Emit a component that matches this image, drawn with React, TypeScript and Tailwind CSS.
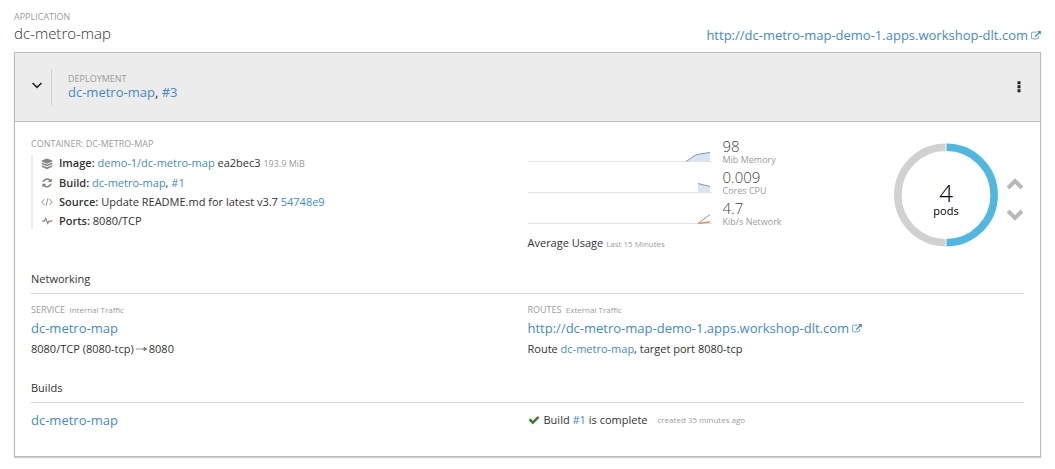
import type { ReactNode } from 'react';

const EXTERNAL_LINK =
  'M1408 928v320q0 119-84.5 203.5t-203.5 84.5h-832q-119 0-203.5-84.5t-84.5-203.5v-832q0-119 84.5-203.5t203.5-84.5h704q14 0 23 9t9 23v64q0 14-9 23t-23 9h-704q-66 0-113 47t-47 113v832q0 66 47 113t113 47h832q66 0 113-47t47-113v-320q0-14 9-23t23-9h64q14 0 23 9t9 23zm384-864v512q0 26-19 45t-45 19-45-19l-176-176-652 652q-10 10-23 10t-23-10l-114-114q-10-10-10-23t10-23l652-652-176-176q-19-19-19-45t19-45 45-19h512q26 0 45 19t19 45z';
const REFRESH =
  'M1639 1056q0 5-1 7-64 268-268 434.5t-478 166.5q-146 0-282.5-55t-243.5-157l-129 129q-19 19-45 19t-45-19-19-45v-448q0-26 19-45t45-19h448q26 0 45 19t19 45-19 45l-137 137q71 66 161 102t187 36q134 0 250-65t186-179q11-17 53-117 8-23 30-23h192q13 0 22.5 9.5t9.5 22.5zm25-800v448q0 26-19 45t-45 19h-448q-26 0-45-19t-19-45 19-45l138-138q-148-137-349-137-134 0-250 65t-186 179q-11 17-53 117-8 23-30 23h-199q-13 0-22.5-9.5t-9.5-22.5v-7q65-268 270-434.5t480-166.5q146 0 284 55.5t245 156.5l130-129q19-19 45-19t45 19 19 45z';
const CHECK =
  'M1671 566q0 40-28 68l-724 724-136 136q-28 28-68 28t-68-28l-136-136-362-362q-28-28-28-68t28-68l136-136q28-28 68-28t68 28l294 295 656-657q28-28 68-28t68 28l136 136q28 28 28 68z';

function Link({ children }: { children: ReactNode }) {
  return (
    <a href="#" className="text-[#428bca] hover:underline">
      {children}
    </a>
  );
}

function RouteLink() {
  return (
    <a href="#" className="flex items-center gap-[3px] text-[13px] leading-5 text-[#428bca] hover:underline">
      http://dc-metro-map-demo-1.apps.workshop-dlt.com
      <svg viewBox="0 0 1792 1664" className="h-[9px] w-[10px] fill-current" aria-hidden="true">
        <path d={EXTERNAL_LINK} />
      </svg>
    </a>
  );
}

function Label({ children }: { children: ReactNode }) {
  return <div className="text-[9px] leading-3 text-[#9c9c9c]">{children}</div>;
}

function Heading({ children }: { children: ReactNode }) {
  return (
    <h2 className="border-b border-[#d6d6d6] pb-1 text-[11px] leading-5 text-[#333]">{children}</h2>
  );
}

function Detail({ icon, name, children }: { icon: ReactNode; name: string; children: ReactNode }) {
  return (
    <li className="flex items-center gap-1.5 whitespace-nowrap">
      <svg viewBox="0 0 12 12" className="size-3 shrink-0 text-[#848484]" aria-hidden="true">
        {icon}
      </svg>
      <span>
        <span className="font-semibold">{name}:</span> {children}
      </span>
    </li>
  );
}

function Metric({ value, unit, children }: { value: string; unit: string; children: ReactNode }) {
  return (
    <div className="flex h-[31px] items-start gap-2.5">
      <svg viewBox="0 0 185 24" className="h-6 w-[185px]" aria-hidden="true">
        <path d="M0 23.5H184" stroke="#e3e3e3" />
        {children}
      </svg>
      <div>
        <div className="text-[15px] leading-4 font-light text-[#444]">{value}</div>
        <div className="text-[9px] leading-3 text-[#9c9c9c]">{unit}</div>
      </div>
    </div>
  );
}

export default function App() {
  return (
    <main className="bg-white px-3.5 pt-[11px] pb-3 font-['Open_Sans',sans-serif] text-[11px] leading-[18px] text-[#333]">
      <header className="flex items-end justify-between pb-[7px]">
        <div>
          <Label>APPLICATION</Label>
          <h1 className="pb-0.5 text-[15px] leading-5 font-light">dc-metro-map</h1>
        </div>
        <RouteLink />
      </header>

      <section className="border border-[#bbb] shadow-[0_1px_1px_#ccc]">
        <div className="flex items-center border-b border-[#bbb] bg-[#ececec] py-4">
          <button type="button" aria-label="Collapse deployment" className="flex h-9 w-[37px] items-center justify-end border-r border-[#d0d0d0] pr-2 pb-1">
            <svg viewBox="0 0 12 12" className="size-3 fill-none stroke-[#292929]" strokeWidth="1.7" aria-hidden="true">
              <path d="M1.5 4 6 8.3 10.5 4" />
            </svg>
          </button>
          <div className="grow pl-4">
            <Label>DEPLOYMENT</Label>
            <div className="pb-px text-[13px] leading-[15px]">
              <Link>dc-metro-map</Link>, <Link>#3</Link>
            </div>
          </div>
          <button type="button" aria-label="Deployment actions" className="mr-[15px] flex w-3 justify-center">
            <svg viewBox="0 0 4 12" className="h-3 w-1 fill-[#222]" aria-hidden="true">
              <path d="M.5 .2h3v3h-3zM.5 4.2h3v3h-3zM.5 8.2h3v3h-3z" />
            </svg>
          </button>
        </div>

        <div className="px-4 pt-4 pb-[26px]">
          <div className="grid grid-cols-2">
            <div>
              <Label>CONTAINER: DC-METRO-MAP</Label>
              <ul className="mt-1 flex flex-col gap-px border-l-2 border-[#eee] pl-2">
                <Detail
                  name="Image"
                  icon={
                    <g fill="currentColor">
                      <path d="M6 .5 11.3 2.6v1L6 5.7.7 3.6v-1z" />
                      <path d="M.7 4.5 6 6.6l5.3-2.1v1.7L6 8.3.7 6.2zM.7 7.2 6 9.3l5.3-2.1v1.6L6 11.3.7 8.8z" />
                    </g>
                  }
                >
                  <Link>demo-1/dc-metro-map</Link> ea2bec3 <span className="text-[9px] text-[#9c9c9c]">193.9 MiB</span>
                </Detail>
                <Detail
                  name="Build"
                  icon={<path transform="translate(.6 .4) scale(.0061)" fill="currentColor" d={REFRESH} />}
                >
                  <Link>dc-metro-map</Link>, <Link>#1</Link>
                </Detail>
                <Detail
                  name="Source"
                  icon={<path d="M3.5 3 .8 6l2.7 3M8.5 3l2.7 3-2.7 3M7 2.2 5 9.8" fill="none" stroke="currentColor" strokeWidth=".9" />}
                >
                  Update README.md for latest v3.7 <Link>54748e9</Link>
                </Detail>
                <Detail
                  name="Ports"
                  icon={<path d="M1 6.2h2.300l1.400-3 2 5.300 1.400-2.300h3.400" fill="none" stroke="currentColor" strokeWidth="1.2" />}
                >
                  8080/TCP
                </Detail>
              </ul>
            </div>

            <div className="flex justify-between">
              <div>
                <Metric value="98" unit="Mib Memory">
                  <path d="M158 23.5 166 18q3.5-2 6-2l10-1.5v9z" fill="#dbe4f0" />
                  <path d="M158 23.5 166 18q3.5-2 6-2l10-1.5" fill="none" stroke="#7399c6" />
                </Metric>
                <Metric value="0.009" unit="Cores CPU">
                  <path d="M170 14.5 182 17.5v6h-12z" fill="#dbe4f0" />
                  <path d="M170 14.5 182 17.5" stroke="#7399c6" />
                </Metric>
                <Metric value="4.7" unit="Kib/s Network">
                  <path d="M170 23.5 182 14.5" stroke="#7399c6" />
                  <path d="M170 23.5 182 22" stroke="#f08a4b" strokeWidth="1.3" />
                </Metric>
                <div className="mt-[3px]">
                  Average Usage <span className="text-[8px] text-[#9c9c9c]">Last 15 Minutes</span>
                </div>
              </div>

              <div className="flex items-start gap-2 pt-[5px]">
                <div className="grid place-items-center">
                  <svg viewBox="0 0 104 104" className="col-start-1 row-start-1 size-[104px]" fill="none" strokeWidth="7.5" aria-hidden="true">
                    <path d="M51.5 99.7A47.7 47.7 0 0 1 51.5 4.3" stroke="#d1d1d1" />
                    <path d="M52.5 4.3A47.7 47.7 0 0 1 52.5 99.7" stroke="#4eb7e2" />
                  </svg>
                  <div className="col-start-1 row-start-1 pt-2 text-center text-black">
                    <div className="text-2xl leading-6 font-light">4</div>
                    <div className="leading-3">pods</div>
                  </div>
                </div>
                <div className="flex h-[104px] flex-col items-center justify-center gap-[17px] pt-2">
                  <button type="button" aria-label="Scale up">
                    <svg viewBox="0 0 18 14" className="h-3.5 w-[18px] fill-none stroke-[#b9b9b9]" strokeWidth="4" aria-hidden="true">
                      <path d="M2 11 9 4l7 7" />
                    </svg>
                  </button>
                  <button type="button" aria-label="Scale down">
                    <svg viewBox="0 0 18 14" className="h-3.5 w-[18px] fill-none stroke-[#b9b9b9]" strokeWidth="4" aria-hidden="true">
                      <path d="M2 3 9 10l7-7" />
                    </svg>
                  </button>
                </div>
              </div>
            </div>
          </div>

          <div className="mt-4">
            <Heading>Networking</Heading>
            <div className="grid grid-cols-2 pt-2.5">
              <div>
                <Label>
                  SERVICE <span className="ml-0.5 text-[8px]">Internal Traffic</span>
                </Label>
                <div className="mt-0.5 text-[13px] leading-5">
                  <Link>dc-metro-map</Link>
                </div>
                <div className="mt-0.5 flex items-center">
                  8080/TCP (8080-tcp)
                  <svg viewBox="0 0 11 6" className="mx-0.5 h-1.5 w-[11px]" aria-label="to">
                    <path d="M0 3h9M8 1.2v3.6L10.8 3z" stroke="#777" strokeWidth=".8" fill="#777" />
                  </svg>
                  8080
                </div>
              </div>
              <div>
                <Label>
                  ROUTES <span className="ml-0.5 text-[8px]">External Traffic</span>
                </Label>
                <div className="mt-0.5 flex">
                  <RouteLink />
                </div>
                <div className="mt-0.5">
                  Route <Link>dc-metro-map</Link>, target port 8080-tcp
                </div>
              </div>
            </div>
          </div>

          <div className="mt-5">
            <Heading>Builds</Heading>
            <div className="grid grid-cols-2 items-center pt-[7px]">
              <div className="text-[13px] leading-5">
                <Link>dc-metro-map</Link>
              </div>
              <div className="flex items-center gap-1">
                <svg viewBox="0 0 1792 1792" className="size-3 fill-[#3f7f36]" aria-hidden="true">
                  <path d={CHECK} />
                </svg>
                <span>
                  Build <Link>#1</Link> is complete
                </span>
                <span className="ml-1.5 text-[8px] text-[#9c9c9c]">created 35 minutes ago</span>
              </div>
            </div>
          </div>
        </div>
      </section>
    </main>
  );
}
